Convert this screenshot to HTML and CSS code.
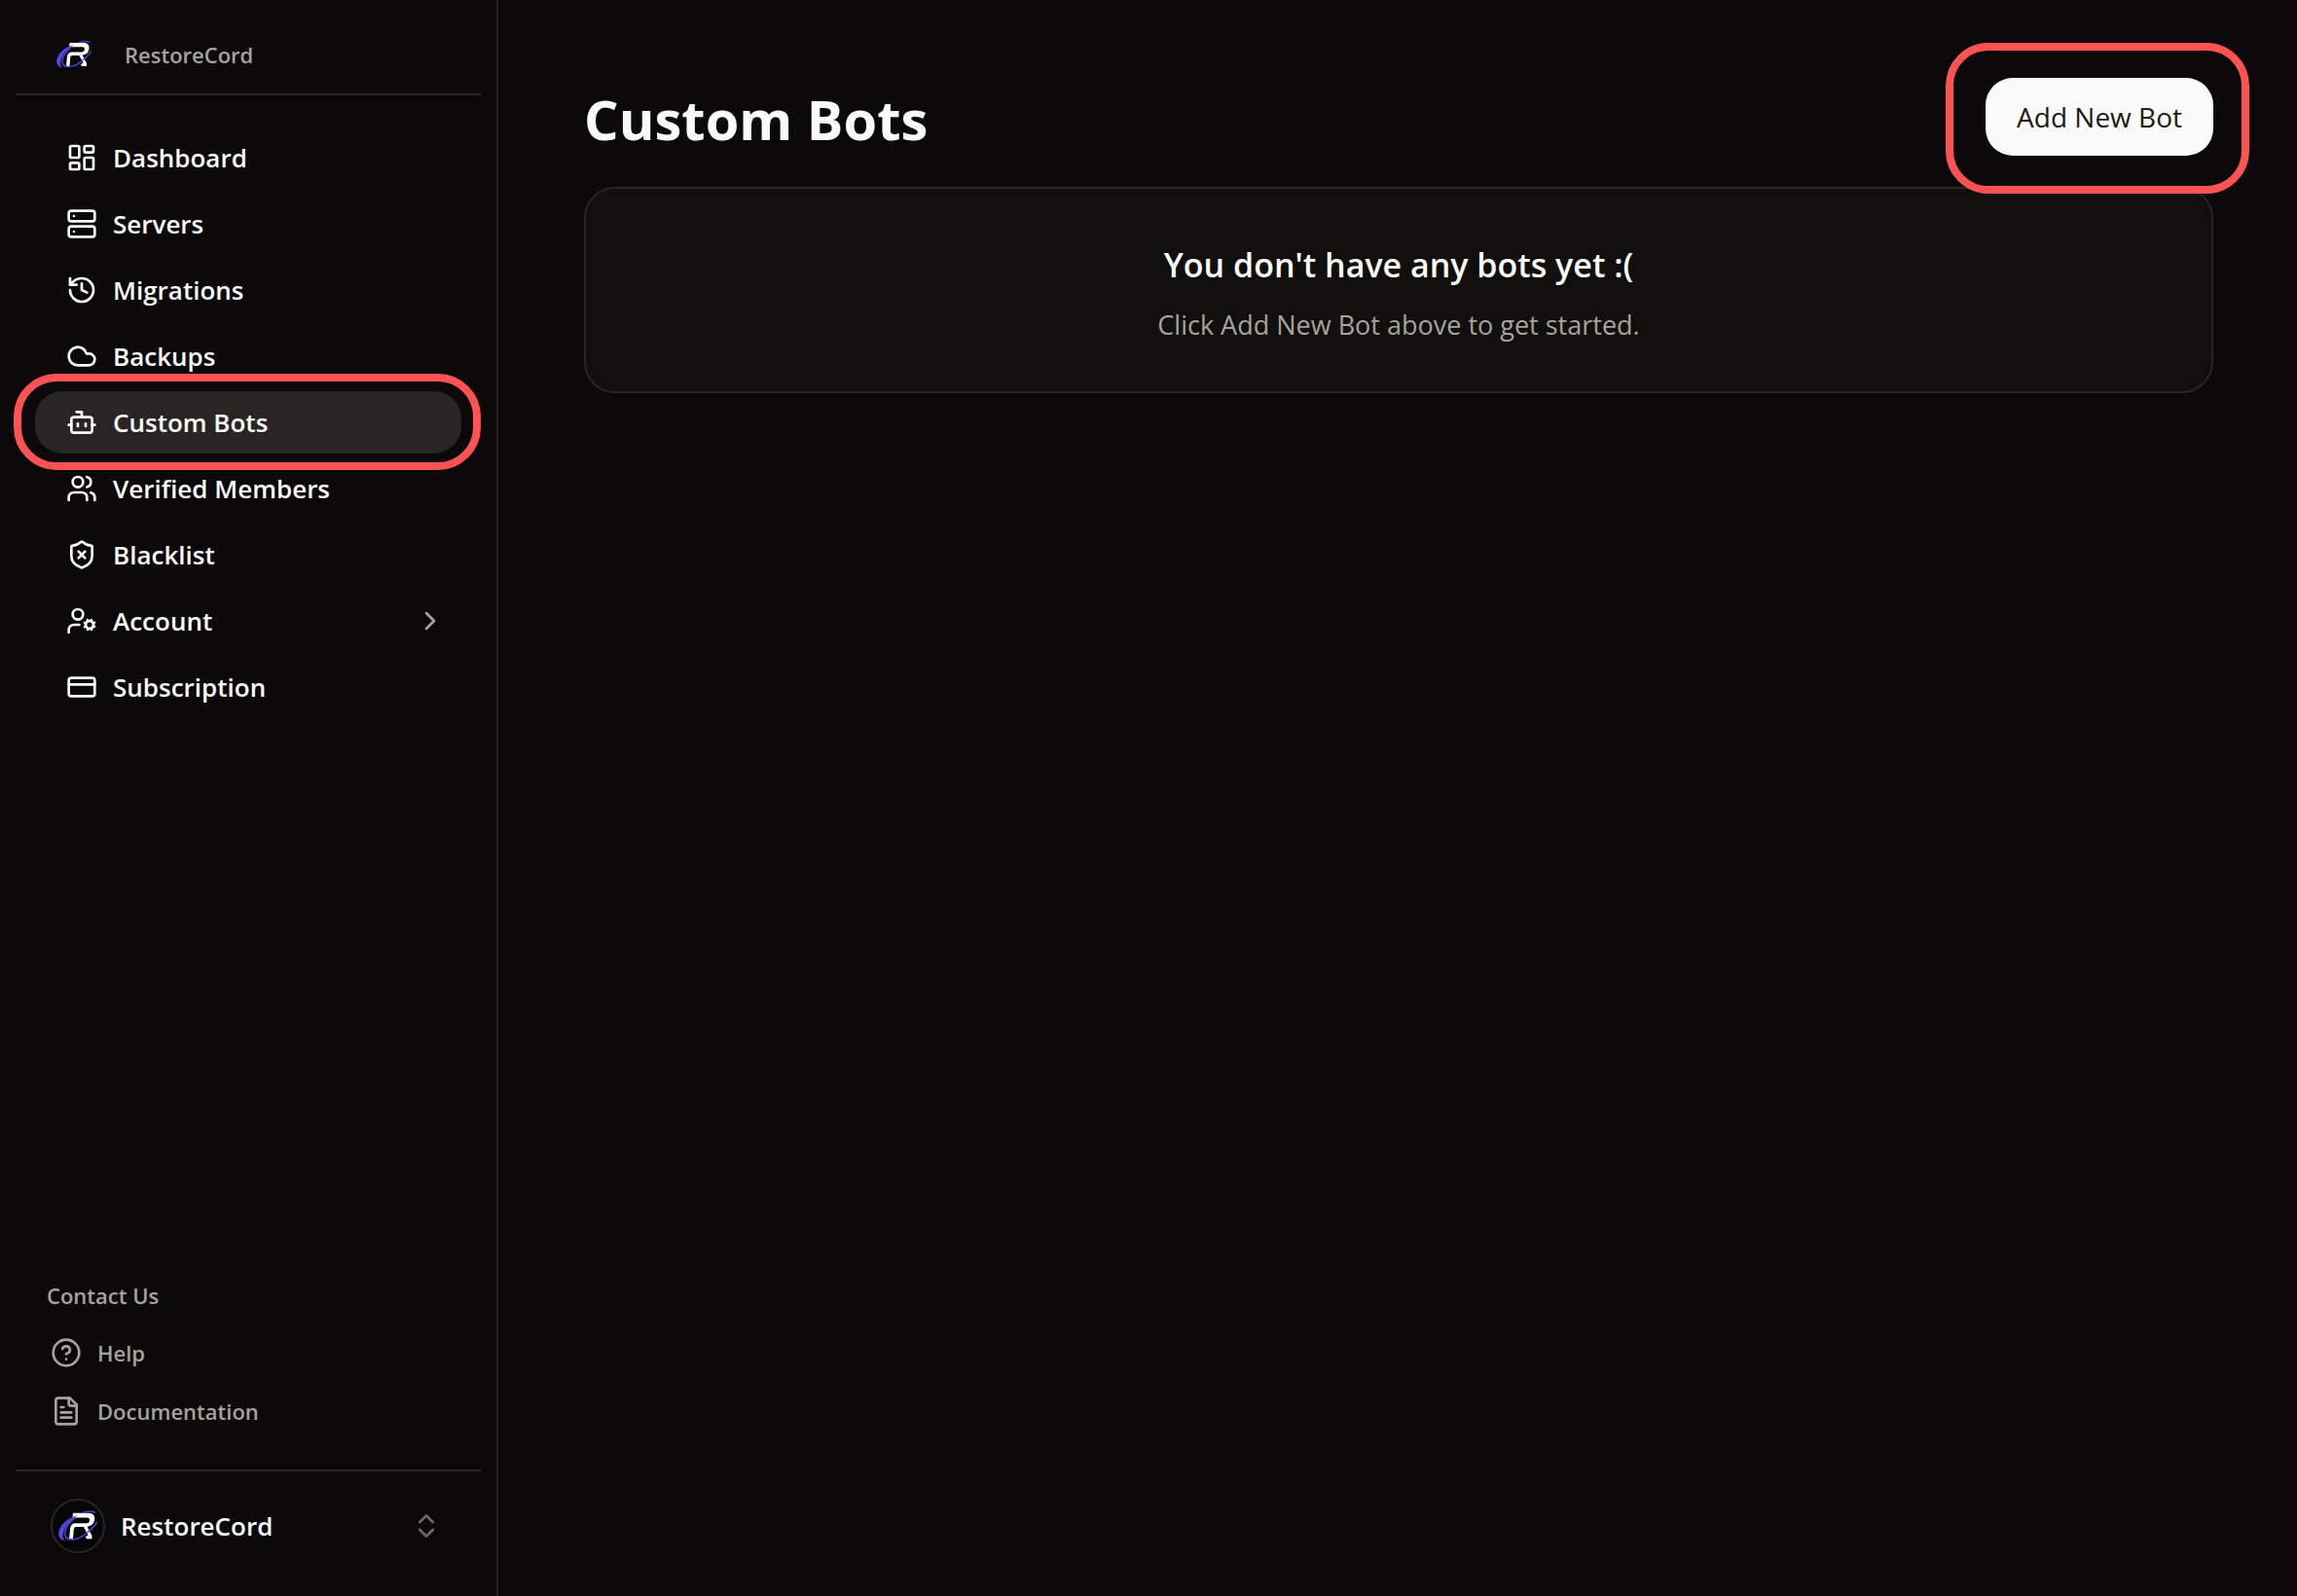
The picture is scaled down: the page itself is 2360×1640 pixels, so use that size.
FILE: index.html
```html
<!DOCTYPE html>
<html lang="en">
<head>
<meta charset="utf-8">
<meta name="viewport" content="width=device-width, initial-scale=1">
<title>Custom Bots - RestoreCord</title>
<link rel="stylesheet" href="styles.css">
</head>
<body>
<svg class="sprite" aria-hidden="true">
  <symbol id="logo" viewBox="0 0 36 28">
    <path fill="#fff" d="M13.500 2H28c4 0 6 2.500 5.500 6-.4 3.500-2 5.500-5.300 6.300l-1.500.4L31 23v3h-5l-1-2 2.500-1.500L23.300 15h-6.600c-1.600 0-2.300.8-2.500 2.300L13.500 26H10l.9-9.500c.4-3.300 2-5 5.400-5h9.400c2 0 3-.9 3.200-2.700.2-1.700-.6-2.500-2.500-2.500H13z"/>
    <path fill="#4f46e5" d="M18 4C9 6 1 13 .2 20.500-.1 24.500 2 27 6 28c-2.600-2.700-2.500-7 .2-12C8.800 11 13 6.500 18 4z"/>
    <path fill="none" stroke="#4f46e5" stroke-width="1.300" d="M15 6.500C9 11.500 5 18 6.200 22.500c1.800 6.500 12.500 4.500 19.800-1.800 4.500-3.700 8-6.700 9.500-10.200M22.500 1.800C26.500.5 31 .2 34.500 1.600"/>
  </symbol>
</svg>

<aside class="sidebar">
  <a class="brand" href="#">
    <svg class="brand-logo" aria-hidden="true"><use href="#logo"/></svg>
    <span>RestoreCord</span>
  </a>

  <nav class="nav" aria-label="Main">
    <a class="nav-link" href="#"><svg class="icon" viewBox="0 0 24 24"><rect width="7" height="9" x="3" y="3" rx="1"/><rect width="7" height="5" x="14" y="3" rx="1"/><rect width="7" height="9" x="14" y="12" rx="1"/><rect width="7" height="5" x="3" y="16" rx="1"/></svg>Dashboard</a>
    <a class="nav-link" href="#"><svg class="icon" viewBox="0 0 24 24"><rect width="20" height="8" x="2" y="2" rx="2"/><rect width="20" height="8" x="2" y="14" rx="2"/><path d="M6 6h.01M6 18h.01"/></svg>Servers</a>
    <a class="nav-link" href="#"><svg class="icon" viewBox="0 0 24 24"><path d="M3 12a9 9 0 1 0 9-9 9.750 9.750 0 0 0-6.740 2.740L3 8"/><path d="M3 3v5h5M12 7v5l4 2"/></svg>Migrations</a>
    <a class="nav-link" href="#"><svg class="icon" viewBox="0 0 24 24"><path d="M17.500 19H9a7 7 0 1 1 6.710-9h1.790a4.500 4.500 0 1 1 0 9Z"/></svg>Backups</a>
    <a class="nav-link nav-link-active" href="#" aria-current="page"><svg class="icon" viewBox="0 0 24 24"><path d="M12 8V4H8"/><rect width="16" height="12" x="4" y="8" rx="2"/><path d="M2 14h2M20 14h2M15 13v2M9 13v2"/></svg>Custom Bots<span class="ring ring-nav"></span></a>
    <a class="nav-link" href="#"><svg class="icon" viewBox="0 0 24 24"><path d="M16 21v-2a4 4 0 0 0-4-4H6a4 4 0 0 0-4 4v2"/><circle cx="9" cy="7" r="4"/><path d="M22 21v-2a4 4 0 0 0-3-3.870M16 3.130a4 4 0 0 1 0 7.750"/></svg>Verified Members</a>
    <a class="nav-link" href="#"><svg class="icon" viewBox="0 0 24 24"><path d="M20 13c0 5-3.500 7.500-7.660 8.950a1 1 0 0 1-.67-.01C7.500 20.500 4 18 4 13V6a1 1 0 0 1 1-1c2 0 4.500-1.200 6.240-2.720a1.170 1.170 0 0 1 1.520 0C14.510 3.810 17 5 19 5a1 1 0 0 1 1 1z"/><path d="m14.500 9.500-5 5M9.500 9.500l5 5"/></svg>Blacklist</a>
    <button class="nav-link" type="button" aria-expanded="false"><svg class="icon" viewBox="0 0 24 24"><circle cx="18" cy="15" r="3"/><circle cx="9" cy="7" r="4"/><path d="M10 15H6a4 4 0 0 0-4 4v2M21.700 16.400l-.9-.3M15.200 13.900l-.9-.3M16.600 18.700l.3-.9M19.100 12.200l.3-.9M19.600 18.700l-.4-1M16.800 12.300l-.4-1M14.300 16.600l1-.4M20.700 13.800l1-.4"/></svg>Account<svg class="icon nav-chevron" viewBox="0 0 24 24"><path d="m9 18 6-6-6-6"/></svg></button>
    <a class="nav-link" href="#"><svg class="icon" viewBox="0 0 24 24"><rect width="20" height="14" x="2" y="5" rx="2"/><path d="M2 10h20"/></svg>Subscription</a>
  </nav>

  <section class="contact">
    <h2 class="contact-title">Contact Us</h2>
    <a class="contact-link" href="#"><svg class="icon" viewBox="0 0 24 24"><circle cx="12" cy="12" r="10"/><path d="M9.090 9a3 3 0 0 1 5.830 1c0 2-3 3-3 3M12 17h.01"/></svg>Help</a>
    <a class="contact-link" href="#"><svg class="icon" viewBox="0 0 24 24"><path d="M15 2H6a2 2 0 0 0-2 2v16a2 2 0 0 0 2 2h12a2 2 0 0 0 2-2V7Z"/><path d="M14 2v4a2 2 0 0 0 2 2h4M10 9H8M16 13H8M16 17H8"/></svg>Documentation</a>
  </section>

  <button class="account" type="button">
    <span class="avatar"><svg class="avatar-logo" aria-hidden="true"><use href="#logo"/></svg></span>
    <span>RestoreCord</span>
    <svg class="icon account-toggle" viewBox="0 0 24 24"><path d="m7 15 5 5 5-5M7 9l5-5 5 5"/></svg>
  </button>
</aside>

<main class="main">
  <header class="page-header">
    <h1 class="page-title">Custom Bots</h1>
    <button class="add-button" type="button">Add New Bot<span class="ring ring-button"></span></button>
  </header>
  <section class="empty">
    <h2 class="empty-title">You don't have any bots yet :(</h2>
    <p class="empty-text">Click Add New Bot above to get started.</p>
  </section>
</main>
</body>
</html>
```
FILE: styles.css
```css
:root {
  --background: #0b090a;
  --card: #100f0d;
  --border: #272525;
  --accent: #292524;
  --text: #fafaf9;
  --muted: #a8a29e;
  --highlight: #ff5252;
}

* {
  box-sizing: border-box;
}

body {
  display: flex;
  min-height: 100vh;
  margin: 0;
  background: var(--background);
  color: var(--text);
  font-family: "Open Sans", "Noto Sans", sans-serif;
  font-size: 26px;
}

h1, h2, p {
  margin: 0;
}

a {
  color: inherit;
  text-decoration: none;
}

button {
  border: 0;
  background: none;
  color: inherit;
  font: inherit;
  text-align: left;
  cursor: pointer;
}

.sprite {
  position: absolute;
  width: 0;
  height: 0;
}

.icon {
  flex: none;
  width: 32px;
  height: 32px;
  fill: none;
  stroke: currentColor;
  stroke-width: 2;
  stroke-linecap: round;
  stroke-linejoin: round;
}

.sidebar {
  display: flex;
  flex: none;
  flex-direction: column;
  width: 512px;
  padding: 16px;
  border-right: 2px solid var(--border);
}

.brand {
  display: flex;
  align-items: center;
  gap: 34px;
  height: 82px;
  padding: 0 42px;
  border-bottom: 2px solid var(--border);
  color: var(--muted);
  font-size: 22px;
  font-weight: 600;
}

.brand-logo {
  width: 36px;
  height: 28px;
}

.nav {
  display: flex;
  flex-direction: column;
  gap: 4px;
  padding: 32px 20px;
}

.nav-link {
  position: relative;
  display: flex;
  align-items: center;
  gap: 16px;
  height: 64px;
  padding: 0 16px 0 32px;
  border-radius: 28px;
  font-weight: 600;
}

.nav-link-active {
  background: var(--accent);
}

.nav-chevron {
  margin-left: auto;
  color: var(--muted);
}

.ring {
  position: absolute;
  z-index: 1;
  border: 8px solid var(--highlight);
  border-radius: 44px;
  pointer-events: none;
}

.ring-nav {
  inset: -18px -20px -17px -22px;
}

.ring-button {
  inset: -36px -37px -39px -41px;
}

.contact {
  margin-top: auto;
  padding: 0 32px 30px;
  color: var(--muted);
  font-size: 22px;
  font-weight: 600;
}

.contact-title {
  font-size: 22px;
  font-weight: 600;
  line-height: 58px;
}

.contact-link {
  display: flex;
  align-items: center;
  gap: 16px;
  height: 60px;
  padding: 0 4px;
}

.account {
  display: flex;
  align-items: center;
  gap: 16px;
  height: 114px;
  padding: 0 40px 0 36px;
  border-top: 2px solid var(--border);
  font-weight: 600;
}

.avatar {
  display: grid;
  place-items: center;
  width: 56px;
  height: 56px;
  border: 2px solid var(--border);
  border-radius: 50%;
  background: #060606;
}

.avatar-logo {
  width: 40px;
  height: 32px;
}

.account-toggle {
  margin-left: auto;
  opacity: 0.4;
}

.main {
  flex: 1;
  padding: 80px 86px 80px 88px;
}

.page-header {
  display: flex;
  align-items: center;
  justify-content: space-between;
  height: 80px;
  margin-bottom: 32px;
}

.page-title {
  padding-top: 4px;
  font-size: 56px;
  font-weight: 700;
}

.add-button {
  position: relative;
  height: 80px;
  padding: 0 32px;
  border-radius: 28px;
  background: var(--text);
  color: #1c1917;
  font-size: 28px;
}

.empty {
  display: flex;
  flex-direction: column;
  align-items: center;
  gap: 12px;
  padding: 48px;
  border: 2px solid var(--border);
  border-radius: 32px;
  background: var(--card);
  text-align: center;
}

.empty-title {
  font-size: 34px;
  font-weight: 600;
  line-height: 60px;
}

.empty-text {
  color: var(--muted);
  font-size: 27px;
  line-height: 40px;
}
```
